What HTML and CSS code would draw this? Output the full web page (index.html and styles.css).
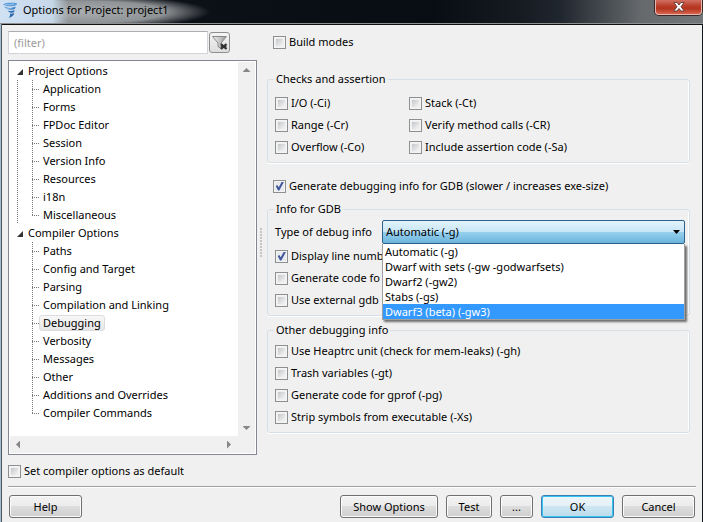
FILE: index.html
```html
<!DOCTYPE html>
<html lang="en">
<head>
<meta charset="utf-8">
<title>Options for Project: project1</title>
<link rel="stylesheet" href="styles.css">
</head>
<body>
<div class="window">
  <header class="titlebar">
    <svg class="app-icon" width="16" height="18" viewBox="0 0 16 18" aria-hidden="true">
      <path d="M1 3.200C4 1.600 11 1.500 15 2.200c.4 1.200-1 2.300-3 2.800-4 .8-8 .3-11-1.800z" fill="#5b9bd8"/>
      <path d="M2 5.600c3.500 1.800 8 1.700 11.500-.2.2 1.800-1 2.900-2.700 3.200C7.500 9.200 4 8 2 5.600z" fill="#3a7cc4"/>
      <path d="M5.500 9.400c2.300.9 4.500.7 7-.4.1 1.600-.7 2.500-2 2.800-1.900.3-3.800-.6-5-2.400z" fill="#3270b6"/>
      <path d="M8 12.500c1.300.5 2.900.3 4.200-.5-.1 2.200-1.800 3.800-5.500 4.900 1.300-1.300 1.700-2.700 1.300-4.400z" fill="#2a66a8"/>
      <path d="M3 3.300c3 .6 6 .5 9-.4M4.500 7c2 .5 4 .4 6-.2" stroke="#a5cdf0" stroke-width=".8" fill="none"/>
    </svg>
    <h1 class="title">Options for Project: project1</h1>
    <button class="close" type="button" aria-label="Close">
      <svg width="12" height="10" viewBox="0 0 12 10" aria-hidden="true">
        <path d="M1 .5h3l2 2.500 2-2.500h3L8 4.700l3.200 4.300H8L6 6.500 4 9H.8L4 4.700z" fill="#fff" stroke="#54302e" stroke-width=".8"/>
      </svg>
    </button>
  </header>

  <main class="client">
    <div class="columns">
      <section class="side">
        <div class="filter">
          <input class="filter-box" type="text" placeholder="(filter)" aria-label="Filter">
          <button class="filter-clear" type="button" aria-label="Clear filter">
            <svg width="18" height="16" viewBox="0 0 18 16" aria-hidden="true">
              <defs><linearGradient id="funnel" x1="0" x2="1"><stop offset="0" stop-color="#f4f4f4"/><stop offset="1" stop-color="#9a9a9a"/></linearGradient></defs>
              <path d="M1.500 1.500h14L10 8v5.500l-3-2V8z" fill="url(#funnel)" stroke="#888"/>
              <path d="M10 9l5.500 5M15.500 9l-5.500 5" stroke="#333" stroke-width="2.200"/>
              <path d="M10 11.500h5.500" stroke="#333" stroke-width="1.500"/>
            </svg>
          </button>
        </div>
        <div class="tree-box">
          <ul class="tree">
            <li class="branch"><span class="node"><i class="twisty"></i>Project Options</span>
              <ul class="leaves guided">
                <li>Application</li><li>Forms</li><li>FPDoc Editor</li><li>Session</li><li>Version Info</li><li>Resources</li><li>i18n</li><li>Miscellaneous</li>
              </ul>
            </li>
            <li class="branch"><span class="node"><i class="twisty"></i>Compiler Options</span>
              <ul class="leaves">
                <li>Paths</li><li>Config and Target</li><li>Parsing</li><li>Compilation and Linking</li><li><span class="selected">Debugging</span></li><li>Verbosity</li><li>Messages</li><li>Other</li><li>Additions and Overrides</li><li>Compiler Commands</li>
              </ul>
            </li>
          </ul>
          <div class="bar vertical"><i class="arrow up"></i><i class="arrow down"></i></div>
          <div class="bar horizontal"><i class="arrow left"></i><i class="arrow right"></i></div>
        </div>
      </section>

      <div class="splitter"><i class="grip"></i></div>

      <section class="options">
        <label class="check top"><input type="checkbox">Build modes</label>

        <fieldset class="group checks">
          <legend>Checks and assertion</legend>
          <div class="pairs">
            <label class="check"><input type="checkbox">I/O (-Ci)</label>
            <label class="check"><input type="checkbox">Stack (-Ct)</label>
            <label class="check"><input type="checkbox">Range (-Cr)</label>
            <label class="check"><input type="checkbox">Verify method calls (-CR)</label>
            <label class="check"><input type="checkbox">Overflow (-Co)</label>
            <label class="check"><input type="checkbox">Include assertion code (-Sa)</label>
          </div>
        </fieldset>

        <label class="check top"><input type="checkbox" checked>Generate debugging info for GDB (slower / increases exe-size)</label>

        <fieldset class="group gdb">
          <legend>Info for GDB</legend>
          <div class="type-row">
            <label for="debug-type">Type of debug info</label>
            <div class="combo">
              <select id="debug-type"><option>Automatic (-g)</option></select>
              <ul class="menu">
                <li>Automatic (-g)</li>
                <li>Dwarf with sets (-gw -godwarfsets)</li>
                <li>Dwarf2 (-gw2)</li>
                <li>Stabs (-gs)</li>
                <li class="active">Dwarf3 (beta) (-gw3)</li>
              </ul>
            </div>
          </div>
          <label class="check"><input type="checkbox" checked>Display line numb</label>
          <label class="check"><input type="checkbox">Generate code fo</label>
          <label class="check"><input type="checkbox">Use external gdb</label>
        </fieldset>

        <fieldset class="group other">
          <legend>Other debugging info</legend>
          <label class="check"><input type="checkbox">Use Heaptrc unit (check for mem-leaks) (-gh)</label>
          <label class="check"><input type="checkbox">Trash variables (-gt)</label>
          <label class="check"><input type="checkbox">Generate code for gprof (-pg)</label>
          <label class="check"><input type="checkbox">Strip symbols from executable (-Xs)</label>
        </fieldset>
      </section>
    </div>

    <label class="check default"><input type="checkbox">Set compiler options as default</label>

    <footer class="footer">
      <button class="btn help" type="button">Help</button>
      <button class="btn wide" type="button">Show Options</button>
      <button class="btn small" type="button">Test</button>
      <button class="btn tiny" type="button">...</button>
      <button class="btn ok" type="button">OK</button>
      <button class="btn" type="button">Cancel</button>
    </footer>
  </main>
</div>
</body>
</html>
```
FILE: styles.css
```css
* { box-sizing: border-box; }
body, ul, h1 { margin: 0; padding: 0; }
ul { list-style: none; }

body {
  font: 11px/16px "Noto Sans", "Open Sans", sans-serif;
  color: #000;
  overflow: hidden;
}
button, input, select { font: inherit; color: inherit; margin: 0; }

.window {
  min-height: 100vh;
  display: flex;
  flex-direction: column;
  padding-right: 1px;
  background: #14171b;
}

/* Title bar */
.titlebar {
  display: flex;
  align-items: flex-start;
  gap: 5px;
  height: 24px;
  margin-right: -1px;
  padding: 1px 1px 0 2px;
  border-bottom: 1px solid #8d8f91;
  background:
    linear-gradient(90deg, #cfe1f3 0, #c6d8e8 52px, transparent 68px),
    radial-gradient(ellipse 130px 17px at 80px 12px, #a9adaf 0%, #8f9395 65%, transparent 100%),
    linear-gradient(90deg, #23282c 0, #0c1017 190px, #080c13 430px, #161b22 520px, #20262e 560px, #65696c 640px, #74777a 100%);
}
.title { flex: 1; font-size: 11px; font-weight: normal; line-height: 18px; }
.close {
  width: 47px;
  height: 15px;
  margin-top: -1px;
  padding: 0;
  line-height: 0;
  border: 1px solid #e2b9b3;
  border-top: 0;
  border-radius: 0 0 4px 4px;
  background: linear-gradient(#cf7163 0, #b93a26 45%, #b3341f 60%, #d8624c 100%);
  box-shadow: 0 0 0 1px #3c2726;
}

/* Dialog body */
.client {
  flex: 1;
  display: flex;
  flex-direction: column;
  margin-left: 2px;
  padding: 6px 6px 4px;
  border-top: 1px solid #111;
  background: #f0f0f0;
  box-shadow: -1px 0 #4b5a66, -2px 0 #a9bccb;
}
.columns { display: flex; }

.side { width: 249px; display: flex; flex-direction: column; }
.filter { display: flex; gap: 1px; align-items: center; margin-bottom: 6px; }
.filter-box {
  width: 200px;
  height: 23px;
  padding: 0 5px;
  border: 1px solid #d0d3d8;
  border-top-color: #abadb3;
  background: #fff;
}
.filter-box::placeholder { color: #9b9b9b; opacity: 1; }
.filter-clear {
  width: 21px;
  height: 21px;
  padding: 0;
  line-height: 0;
  border: 1px solid #8e8f8f;
  border-radius: 3px;
  background: linear-gradient(#f5f5f5, #ddd);
}

.tree-box {
  flex: 1;
  display: grid;
  grid-template: 1fr 17px / 1fr 17px;
  padding: 1px;
  border: 1px solid #828790;
  background: #fff;
}
.tree { line-height: 18px; }
.node { display: flex; align-items: center; padding-left: 7px; }
.twisty {
  width: 6px;
  height: 6px;
  margin: 2px 5px 0 0;
  background: #333;
  clip-path: polygon(100% 0, 100% 100%, 0 100%);
}
.leaves { padding-left: 7px; }
.leaves li {
  margin-left: 15px;
  padding-left: 11px;
  background:
    repeating-linear-gradient(90deg, #777 0 1px, transparent 1px 2px) 0 9px / 7px 1px no-repeat,
    repeating-linear-gradient(#777 0 1px, transparent 1px 2px) 0 0 / 1px 100% no-repeat;
}
.leaves li:last-child {
  background:
    repeating-linear-gradient(90deg, #777 0 1px, transparent 1px 2px) 0 9px / 7px 1px no-repeat,
    repeating-linear-gradient(#777 0 1px, transparent 1px 2px) 0 0 / 1px 10px no-repeat;
}
.guided { background: repeating-linear-gradient(#777 0 1px, transparent 1px 2px) 7px 0 / 1px 100% no-repeat; }
.selected {
  display: inline-block;
  line-height: 14px;
  margin-left: -4px;
  padding: 0 3px;
  border: 1px solid #dcdcdc;
  border-radius: 3px;
  background: linear-gradient(#f8f8f8, #e6e6e6);
}

.bar { display: flex; justify-content: space-between; align-items: center; background: #f0f0f0; }
.vertical { flex-direction: column; padding: 6px 0; }
.horizontal { grid-column: 1 / 3; padding: 0 24px 0 6px; }
.arrow { background: #85878a; }
.up, .down { width: 8px; height: 4px; }
.left, .right { width: 4px; height: 8px; }
.up { clip-path: polygon(50% 0, 100% 100%, 0 100%); }
.down { clip-path: polygon(0 0, 100% 0, 50% 100%); }
.left { clip-path: polygon(100% 0, 100% 100%, 0 50%); }
.right { clip-path: polygon(0 0, 100% 50%, 0 100%); }

.splitter { width: 10px; display: flex; align-items: center; justify-content: center; }
.grip {
  width: 4px;
  height: 30px;
  background: radial-gradient(circle at 1px 1px, #c4c4c4 1px, transparent 1px) 0 0 / 4px 3px;
}

/* Option groups */
.options { flex: 1; padding: 0 6px 22px 0; }
.check { display: flex; align-items: center; gap: 3px; height: 22px; white-space: nowrap; }
.top { padding-left: 6px; }
.check input {
  appearance: none;
  position: relative;
  flex: none;
  width: 13px;
  height: 13px;
  padding: 2px;
  border: 1px solid #8e8f8f;
  background: linear-gradient(135deg, #c4c7cb, #f6f6f6) content-box;
  box-shadow: inset 0 0 0 1px #f4f4f4;
}
.check input:checked { background: #e8eaee; }
.check input:checked::after {
  content: "";
  position: absolute;
  inset: 1px;
  background: #42579c;
  clip-path: polygon(8% 50%, 26% 40%, 42% 64%, 76% 0, 100% 4%, 48% 100%, 34% 100%);
}

.group {
  min-width: 0;
  margin: 0;
  padding: 0 4px 4px 7px;
  border: 1px solid #d5dfe5;
  border-radius: 3px;
  box-shadow: 0 1px #fff, inset -1px 0 #fff;
}
.group legend { margin-left: -1px; padding: 0 2px; }
.checks { margin: 18px 0 12px; padding-top: 5px; }
.pairs { display: grid; grid-template-columns: 134px 1fr; }
.gdb { margin-top: 4px; padding-top: 3px; }
.other { margin-top: 6px; padding-top: 2px; }

.type-row { display: flex; align-items: center; margin-bottom: 1px; }
.type-row label { width: 107px; white-space: nowrap; }
.combo { position: relative; flex: 1; }
.combo select {
  appearance: none;
  display: block;
  width: 100%;
  height: 24px;
  padding: 0 3px;
  border: 1px solid #2c628b;
  border-radius: 2px;
  background: linear-gradient(#e3f3fb 0, #c6e6f6 49%, #98d1ef 50%, #6cb4db 100%);
}
.combo::after {
  content: "";
  position: absolute;
  right: 5px;
  top: 10px;
  width: 7px;
  height: 4px;
  background: #000;
  clip-path: polygon(0 0, 100% 0, 50% 100%);
}
.menu {
  position: absolute;
  z-index: 2;
  top: 24px;
  left: 0;
  right: 0;
  border: 1px solid #a0a0a0;
  border-top: 0;
  background: #fff;
  line-height: 15px;
  box-shadow: 2px 2px 2px rgba(0, 0, 0, .55);
}
.menu li { padding-left: 2px; white-space: nowrap; }
.menu .active { background: #3399ff; color: #fff; }

/* Bottom area */
.default { margin-top: 5px; }
.footer {
  display: flex;
  gap: 8px;
  margin-top: 4px;
  padding: 8px 1px 0;
  border-top: 1px solid #a0a0a0;
  box-shadow: inset 0 1px #fff;
}
.btn {
  width: 73px;
  height: 23px;
  padding: 0;
  border: 1px solid #707070;
  border-radius: 3px;
  background: linear-gradient(#f3f3f3 0, #ebebeb 49%, #dddddd 50%, #cfcfcf 100%);
  box-shadow: inset 0 0 0 1px #fbfbfb;
}
.help { margin-right: auto; }
.wide { width: 98px; }
.small { width: 46px; }
.tiny { width: 33px; }
.ok {
  border-color: #3c7fb1;
  background: linear-gradient(#eef6fa 0, #e2f0f7 49%, #cfe6f2 50%, #bcdcec 100%);
  box-shadow: inset 0 0 0 1px #35c4f3;
}
```
